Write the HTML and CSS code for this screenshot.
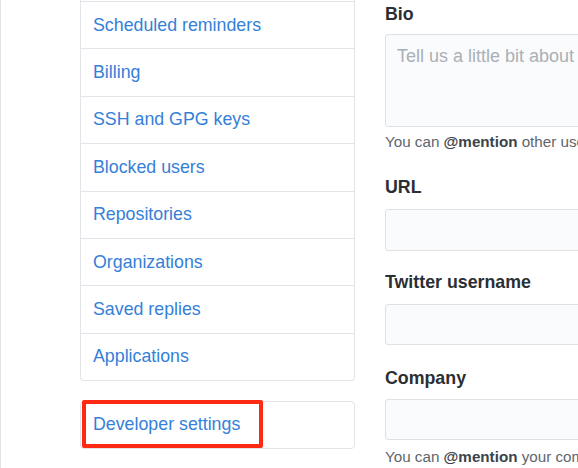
FILE: index.html
```html
<!DOCTYPE html>
<html>
<head>
<meta charset="utf-8">
<link rel="stylesheet" href="styles.css">
</head>
<body>
<div class="page">
  <div class="gutter"></div>
  <aside class="sidebar">
    <nav class="menu">
      <a class="menu-item" href="#">Scheduled reminders</a>
      <a class="menu-item" href="#">Billing</a>
      <a class="menu-item" href="#">SSH and GPG keys</a>
      <a class="menu-item" href="#">Blocked users</a>
      <a class="menu-item" href="#">Repositories</a>
      <a class="menu-item" href="#">Organizations</a>
      <a class="menu-item" href="#">Saved replies</a>
      <a class="menu-item" href="#">Applications</a>
    </nav>
    <nav class="menu menu-dev">
      <a class="menu-item dev-item" href="#">Developer settings</a>
      <span class="highlight"></span>
    </nav>
  </aside>
  <main class="main">
    <div class="group group-bio">
      <label class="label">Bio</label>
      <div class="textarea"><span class="placeholder">Tell us a little bit about yourself</span></div>
      <p class="note">You can <strong>@mention</strong> other users and organizations to link to them.</p>
    </div>
    <div class="group group-url">
      <label class="label">URL</label>
      <div class="input"></div>
    </div>
    <div class="group group-twitter">
      <label class="label">Twitter username</label>
      <div class="input input-sm"></div>
    </div>
    <div class="group group-company">
      <label class="label">Company</label>
      <div class="input input-sm"></div>
      <p class="note note-company">You can <strong>@mention</strong> your company's GitHub organization to link it.</p>
    </div>
  </main>
</div>
</body>
</html>
```
FILE: styles.css
```css
* { box-sizing: border-box; }
html, body {
  margin: 0;
  padding: 0;
  background: #ffffff;
  overflow: hidden;
}
body {
  font-family: "Liberation Sans", Arial, sans-serif;
  width: 578px;
  height: 468px;
  border-left: 1px solid #e4e4e4;
}
.page {
  display: flex;
  align-items: flex-start;
  height: 468px;
}
.gutter {
  width: 79px;
  flex: none;
}
.sidebar {
  width: 275px;
  flex: none;
  display: flex;
  flex-direction: column;
}
.menu {
  display: flex;
  flex-direction: column;
  border: 1px solid #e1e4e8;
  border-top: none;
  border-radius: 0 0 4px 4px;
  padding-top: 1px;
}
.menu-item {
  display: flex;
  align-items: center;
  height: 47.4px;
  padding: 0 12px;
  border-top: 1px solid #e1e4e8;
  color: #3580d8;
  text-decoration: none;
  font-size: 17.8px;
}
.menu-dev {
  position: relative;
  margin-top: 20px;
  border-top: 1px solid #e1e4e8;
  border-radius: 4px;
  padding-top: 0;
}
.dev-item {
  border-top: none;
  height: 45.5px;
}
.highlight {
  position: absolute;
  left: 1px;
  top: -2px;
  width: 181px;
  height: 48px;
  border: 4px solid #ff2a12;
  border-radius: 2px;
}
.main {
  flex: 1;
  min-width: 0;
  margin-left: 30px;
  padding-top: 3px;
  overflow: hidden;
  white-space: nowrap;
}
.label {
  display: block;
  font-weight: bold;
  font-size: 17.8px;
  line-height: 22px;
  color: #2b2f33;
  margin-bottom: 11px;
}
.group-bio .label { margin-bottom: 9px; }
.textarea, .input {
  width: 260px;
  background: #fafbfc;
  border: 1px solid #dfe2e5;
  border-radius: 3px;
}
.textarea {
  height: 93px;
  padding: 10px 11px;
}
.placeholder {
  font-size: 18px;
  line-height: 22px;
  color: #aab0b6;
}
.input { height: 42px; }
.input-sm { height: 41px; }
.note {
  margin: 6px 0 0;
  font-size: 15.2px;
  line-height: 18px;
  color: #60666c;
}
.note strong { color: #3d4349; }
.group-url { margin-top: 25px; }
.group-twitter { margin-top: 20px; }
.group-company { margin-top: 22px; }
.group-company .label { margin-bottom: 10px; }
.note-company { margin-top: 8px; }
```
